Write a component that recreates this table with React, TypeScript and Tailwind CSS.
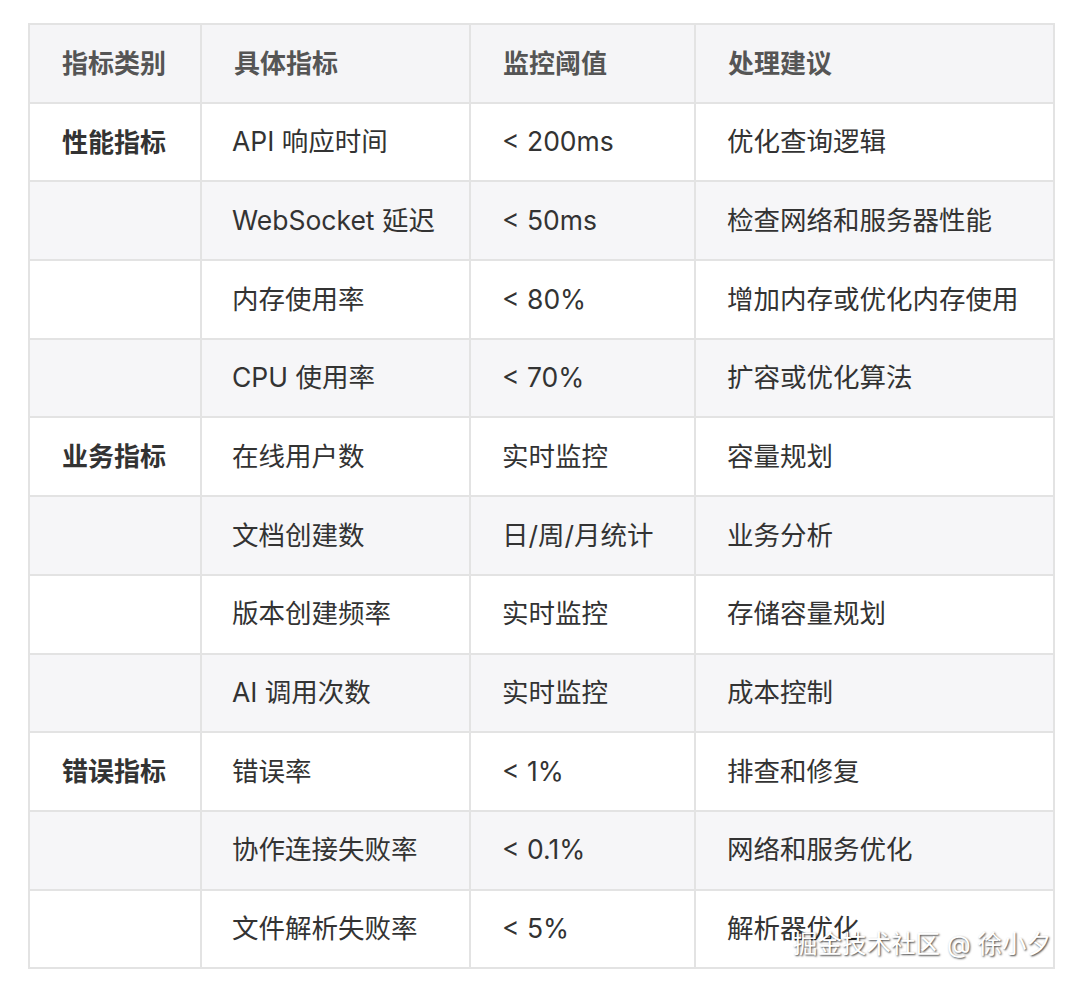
import React from "react";

type Row = { cat?: string; name: string; limit: string; tip: string };

const rows: Row[] = [
  { cat: "性能指标", name: "API 响应时间", limit: "< 200ms", tip: "优化查询逻辑" },
  { name: "WebSocket 延迟", limit: "< 50ms", tip: "检查网络和服务器性能" },
  { name: "内存使用率", limit: "< 80%", tip: "增加内存或优化内存使用" },
  { name: "CPU 使用率", limit: "< 70%", tip: "扩容或优化算法" },
  { cat: "业务指标", name: "在线用户数", limit: "实时监控", tip: "容量规划" },
  { name: "文档创建数", limit: "日/周/月统计", tip: "业务分析" },
  { name: "版本创建频率", limit: "实时监控", tip: "存储容量规划" },
  { name: "AI 调用次数", limit: "实时监控", tip: "成本控制" },
  { cat: "错误指标", name: "错误率", limit: "< 1%", tip: "排查和修复" },
  { name: "协作连接失败率", limit: "< 0.1%", tip: "网络和服务优化" },
  { name: "文件解析失败率", limit: "< 5%", tip: "解析器优化" },
];

const headers = ["指标类别", "具体指标", "监控阈值", "处理建议"];

export default function App() {
  return (
    <div
      className="relative w-[1080px] h-[988px] bg-white pt-[23px] pl-[28px]"
      style={{ fontFamily: 'Inter, "Noto Sans CJK SC", sans-serif' }}
    >
      {/* 表格：用 gap 充当边框线 */}
      <div className="grid w-[1027px] grid-cols-[170px_267px_223px_357px] auto-rows-[76.7px] gap-[2px] border-2 border-[#e3e3e3] bg-[#e3e3e3] text-[26.5px] text-[#333]">
        {headers.map((h) => (
          <div key={h} className="flex items-center bg-[#f5f5f7] pl-[32px] text-[26px] font-semibold text-[#555]">
            {h}
          </div>
        ))}
        {rows.map((r, i) => {
          const bg = i % 2 === 0 ? "bg-white" : "bg-[#f6f6f8]";
          return (
            <React.Fragment key={r.name}>
              <div className={`flex items-center pl-[32px] text-[26px] font-bold text-[#333] ${bg}`}>{r.cat}</div>
              <div className={`flex items-center pl-[30px] ${bg}`}>{r.name}</div>
              <div className={`flex items-center pl-[31px] ${bg}`}>{r.limit}</div>
              <div className={`flex items-center pl-[31px] ${bg}`}>{r.tip}</div>
            </React.Fragment>
          );
        })}
      </div>

      {/* 水印 */}
      <div className="absolute left-[793px] top-[926px] text-[24.5px] text-white [text-shadow:1px_1px_2px_rgba(0,0,0,0.75)]">
        掘金技术社区 @ 徐小夕
      </div>
    </div>
  );
}
